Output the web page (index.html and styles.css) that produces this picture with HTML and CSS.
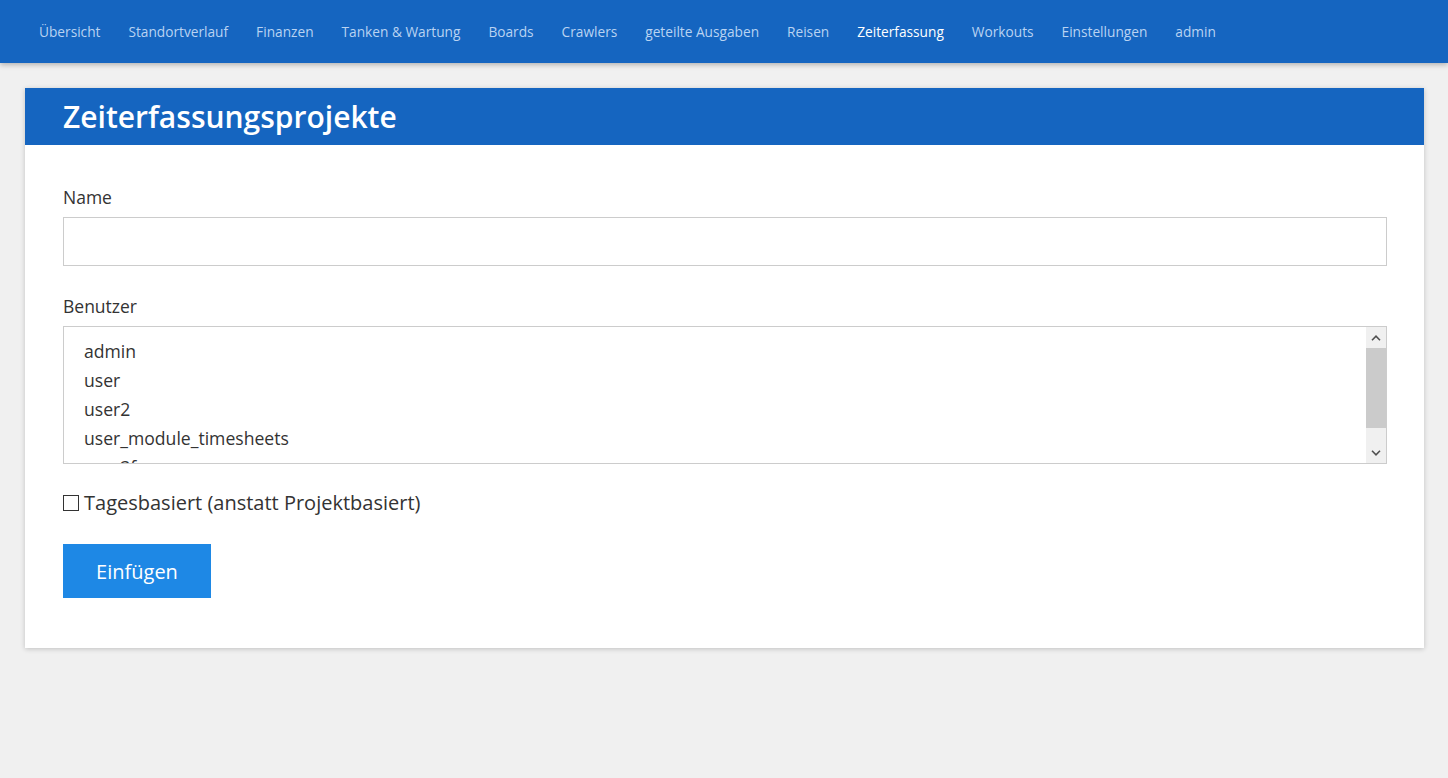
FILE: index.html
```html
<!DOCTYPE html>
<html lang="de">
<head>
<meta charset="utf-8">
<title>Zeiterfassungsprojekte</title>
<link rel="stylesheet" href="styles.css">
</head>
<body>
<nav class="topnav">
  <a href="#">Übersicht</a>
  <a href="#">Standortverlauf</a>
  <a href="#">Finanzen</a>
  <a href="#">Tanken &amp; Wartung</a>
  <a href="#">Boards</a>
  <a href="#">Crawlers</a>
  <a href="#">geteilte Ausgaben</a>
  <a href="#">Reisen</a>
  <a href="#" class="active">Zeiterfassung</a>
  <a href="#">Workouts</a>
  <a href="#">Einstellungen</a>
  <a href="#">admin</a>
</nav>
<main class="page">
  <section class="card">
    <header class="card-head"><h1>Zeiterfassungsprojekte</h1></header>
    <form class="card-body">
      <label class="field-label" for="name">Name</label>
      <input class="text-input" id="name" type="text">
      <label class="field-label" for="users">Benutzer</label>
      <div class="list-box">
        <select class="list-input" id="users" multiple>
          <option>admin</option>
          <option>user</option>
          <option>user2</option>
          <option>user_module_timesheets</option>
          <option>user3fa</option>
        </select>
        <div class="sbar" aria-hidden="true">
          <div class="sbar-btn">
            <svg width="10" height="6" viewBox="0 0 10 6"><path d="M1 5.2 L5 1.2 L9 5.2" fill="none" stroke="#505050" stroke-width="1.6"/></svg>
          </div>
          <div class="sbar-thumb"></div>
          <div class="sbar-track"></div>
          <div class="sbar-btn">
            <svg width="10" height="6" viewBox="0 0 10 6"><path d="M1 0.8 L5 4.8 L9 0.8" fill="none" stroke="#505050" stroke-width="1.6"/></svg>
          </div>
        </div>
      </div>
      <label class="check-row"><input type="checkbox" class="check"> Tagesbasiert (anstatt Projektbasiert)</label>
      <button type="button" class="btn">Einfügen</button>
    </form>
  </section>
</main>
</body>
</html>
```
FILE: styles.css
```css
html, body { margin: 0; padding: 0; }
body {
  background: #f0f0f0;
  font-family: "Open Sans", "Liberation Sans", sans-serif;
  color: #333;
}
.topnav {
  background: #1565c0;
  height: 63px;
  display: flex;
  align-items: center;
  padding: 0 0 0 25px;
  box-shadow: 0 2px 5px rgba(0,0,0,0.25);
  position: relative;
  z-index: 2;
}
.topnav a {
  color: #b9d3f2;
  text-decoration: none;
  font-size: 13.7px;
  padding: 0 14px;
  line-height: 20px;
}
.topnav a.active { color: #ffffff; }
.page { padding: 25px 24px 40px 25px; }
.card {
  background: #fff;
  box-shadow: 0 1px 5px rgba(0,0,0,0.2);
}
.card-head {
  background: #1565c0;
  height: 57px;
  display: flex;
  align-items: center;
  padding: 0 38px;
}
.card-head h1 {
  margin: 0;
  color: #fff;
  font-size: 30px;
  font-weight: 600;
  line-height: 1;
  padding-top: 1px;
}
.card-body {
  padding: 41px 37px 50px 38px;
  display: flex;
  flex-direction: column;
  align-items: flex-start;
}
.field-label {
  font-size: 17.5px;
  line-height: 23px;
  margin-bottom: 8px;
  color: #333;
}
.text-input {
  box-sizing: border-box;
  width: 100%;
  height: 49px;
  border: 1px solid #ccc;
  margin: 0 0 29px;
  font: inherit;
  padding: 0 12px;
  outline: none;
}
.list-box {
  box-sizing: border-box;
  width: 100%;
  height: 138px;
  border: 1px solid #ccc;
  margin: 0 0 26px;
  display: flex;
  background: #fff;
}
.list-input {
  flex: 1;
  min-width: 0;
  height: 100%;
  box-sizing: border-box;
  border: none;
  margin: 0;
  padding: 12px 0 0 10px;
  font-family: "Open Sans", "Liberation Sans", sans-serif;
  font-size: 17.6px;
  color: #333;
  outline: none;
  overflow: hidden;
  background: #fff;
}
.list-input option {
  padding: 0 10px;
  line-height: 29px;
  height: 29px;
}
.sbar {
  width: 20px;
  display: flex;
  flex-direction: column;
  background: #f0f0f0;
}
.sbar-btn {
  height: 21px;
  display: flex;
  align-items: center;
  justify-content: center;
}
.sbar-btn svg { display: block; }
.sbar-thumb {
  height: 80px;
  background: #cbcbcb;
}
.sbar-track { flex: 1; }
.check-row {
  display: flex;
  align-items: center;
  font-size: 20px;
  line-height: 26px;
  color: #333;
  margin-bottom: 28px;
}
.check {
  appearance: none;
  -webkit-appearance: none;
  width: 16px;
  height: 16px;
  border: 1px solid #333;
  margin: 0 5px 0 0;
  box-sizing: border-box;
  background: #fff;
}
.btn {
  background: #1e88e5;
  color: #fff;
  border: none;
  width: 148px;
  height: 54px;
  font-family: "Open Sans", "Liberation Sans", sans-serif;
  font-size: 20px;
  padding: 0;
  cursor: pointer;
}
```
